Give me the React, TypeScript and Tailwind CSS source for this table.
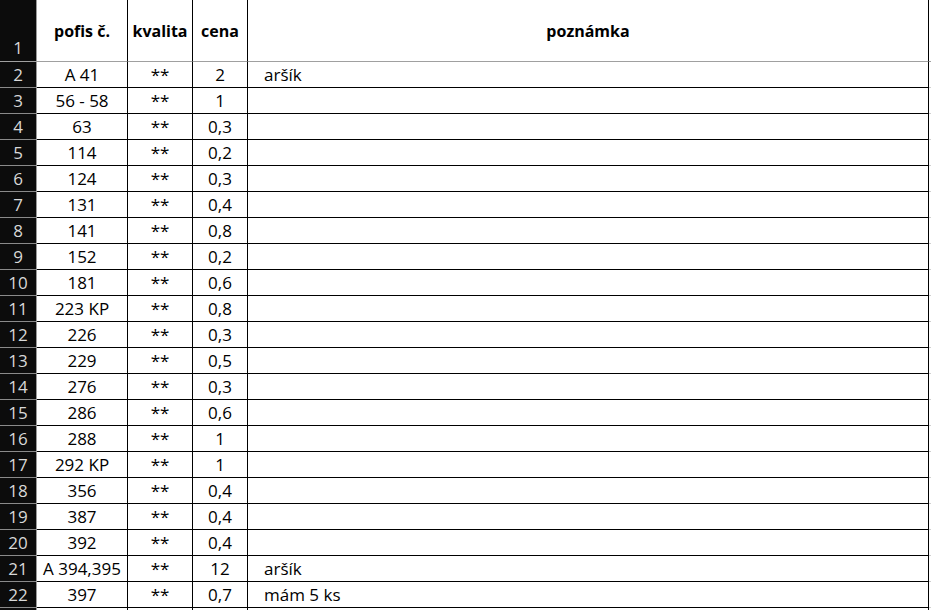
import React from "react";

const rows: [string, string, string, string][] = [
  ["A 41", "**", "2", "aršík"],
  ["56 - 58", "**", "1", ""],
  ["63", "**", "0,3", ""],
  ["114", "**", "0,2", ""],
  ["124", "**", "0,3", ""],
  ["131", "**", "0,4", ""],
  ["141", "**", "0,8", ""],
  ["152", "**", "0,2", ""],
  ["181", "**", "0,6", ""],
  ["223 KP", "**", "0,8", ""],
  ["226", "**", "0,3", ""],
  ["229", "**", "0,5", ""],
  ["276", "**", "0,3", ""],
  ["286", "**", "0,6", ""],
  ["288", "**", "1", ""],
  ["292 KP", "**", "1", ""],
  ["356", "**", "0,4", ""],
  ["387", "**", "0,4", ""],
  ["392", "**", "0,4", ""],
  ["A 394,395", "**", "12", "aršík"],
  ["397", "**", "0,7", "mám 5 ks"],
  ["", "", "", ""],
];

export default function App() {
  return (
    <div
      className="w-[931px] h-[610px] overflow-hidden bg-white text-black"
      style={{ fontFamily: '"Open Sans", "Noto Sans", sans-serif' }}
    >
      {/* header row */}
      <div className="flex h-[62px]">
        <div className="w-[37px] shrink-0 bg-[#0c0c0c] border-r border-r-[#9a9a9a] border-b border-b-[#a0a0a0] flex items-end justify-center pb-[2px] text-[17px] leading-none text-[#d8d8d8]">
          <span className="pb-[3px]">1</span>
        </div>
        <div className="w-[91px] shrink-0 border-r border-r-black border-b border-b-[#a0a0a0] flex items-center justify-center text-[16px] font-bold">
          pofis č.
        </div>
        <div className="w-[65px] shrink-0 border-r border-r-black border-b border-b-[#a0a0a0] flex items-center justify-center text-[16px] font-bold">
          kvalita
        </div>
        <div className="w-[55px] shrink-0 border-r border-r-black border-b border-b-[#a0a0a0] flex items-center justify-center text-[16px] font-bold">
          cena
        </div>
        <div className="w-[681px] shrink-0 border-r border-r-black border-b border-b-[#a0a0a0] flex items-center justify-center text-[16px] font-bold">
          poznámka
        </div>
        <div className="w-[2px] shrink-0 border-b border-b-[#a0a0a0]" />
      </div>
      {rows.map((r, i) => (
        <div key={i} className="flex h-[26px] text-[17px] leading-none">
          <div className="w-[37px] shrink-0 bg-[#0c0c0c] border-r border-r-[#9a9a9a] border-b border-b-[#8a8a8a] flex items-center justify-center text-[#d8d8d8]">
            {i < 21 ? i + 2 : ""}
          </div>
          <div className="w-[91px] shrink-0 border-r border-r-black border-b border-b-black flex items-center justify-center whitespace-nowrap overflow-visible">
            {r[0]}
          </div>
          <div className="w-[65px] shrink-0 border-r border-r-black border-b border-b-black flex items-center justify-center">
            {r[1]}
          </div>
          <div className="w-[55px] shrink-0 border-r border-r-black border-b border-b-black flex items-center justify-center">
            {r[2]}
          </div>
          <div className="w-[681px] shrink-0 border-r border-r-black border-b border-b-black flex items-center pl-[16px]">
            {r[3]}
          </div>
          <div className="w-[2px] shrink-0 border-b border-b-[#d0d0d0]" />
        </div>
      ))}
    </div>
  );
}
